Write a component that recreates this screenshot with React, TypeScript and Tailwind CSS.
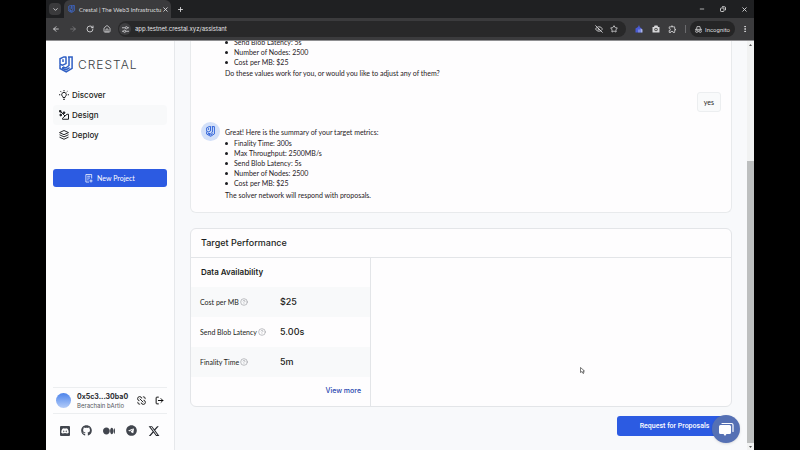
import type { ReactNode } from "react";
import {
  ArrowLeft, ArrowRight, ChevronDown, CircleHelp, EyeOff, House,
  LogOut, Minus, MoreVertical, Plus, RotateCw, Star, X,
} from "lucide-react";
import { FaDiscord, FaGithub, FaMedium, FaTelegram, FaXTwitter } from "react-icons/fa6";
import { MdOutlineExtension } from "react-icons/md";

function CrestalMark({ className }: { className: string }) {
  return (
    <svg viewBox="0 0 14 17" fill="none" stroke="currentColor" strokeWidth="1.5" className={className} aria-hidden="true">
      <path d="M9 .9h4.100v11.400L7.200 16 1 12.500V9" />
      <path d="M7.500 .9H4.800L1 2.800v5.400l2.500 1L7 7.600V1M4 3.300V6" />
      <path d="M10 .9v8.600L6.800 12 3.800 11M3.800 11v1.600l3.200 1.300 3.600-2.200" />
    </svg>
  );
}

function TuneIcon() {
  return (
    <svg viewBox="0 0 12 12" fill="none" stroke="currentColor" strokeWidth="1.4" className="size-[7px]" aria-hidden="true">
      <path d="M0 3h5M10 3h2M0 9h2M7 9h5" />
      <circle cx="7.5" cy="3" r="1.9" />
      <circle cx="4.5" cy="9" r="1.9" />
    </svg>
  );
}

function IncognitoIcon() {
  return (
    <svg viewBox="0 0 12 12" fill="none" stroke="currentColor" strokeWidth="1.3" className="size-[7px]" aria-hidden="true">
      <path d="M0 5.8h12M2.7 5.5 3.5 1h5l.8 4.5" />
      <circle cx="3" cy="9" r="2" />
      <circle cx="9" cy="9" r="2" />
      <path d="M5 8.8h2" />
    </svg>
  );
}

function BulbIcon() {
  return (
    <svg viewBox="0 0 20 20" fill="none" stroke="currentColor" strokeWidth="2" className="size-[10px]" aria-hidden="true">
      <path d="M8 15v-1.500a4.600 4.600 0 1 1 4 0V15ZM8 18.500h4" />
      <path d="M10 0v2.500M0 9.500h2.500M17.500 9.500H20M3 2.500l1.800 1.800M17 2.500l-1.800 1.800" />
    </svg>
  );
}

function DesignIcon() {
  return (
    <svg viewBox="0 0 20 20" fill="none" stroke="currentColor" strokeWidth="2" strokeLinejoin="round" className="size-[10px]" aria-hidden="true">
      <circle cx="2.500" cy="2.500" r="1.800" fill="currentColor" />
      <circle cx="3.500" cy="10" r="1.800" fill="currentColor" />
      <circle cx="10" cy="5.500" r="1.800" fill="currentColor" />
      <path d="m3 3 9 9M7 18.500h12V8.500h-3L7 16.500Z" />
    </svg>
  );
}

function StackIcon() {
  return (
    <svg viewBox="0 0 20 20" fill="none" stroke="currentColor" strokeWidth="1.900" strokeLinejoin="round" className="size-[10px]" aria-hidden="true">
      <path d="m10 1 9 4.200-9 4.200-9-4.200ZM1 9.500l9 4.200 9-4.200M1 14.300l9 4.200 9-4.200" />
    </svg>
  );
}

function NewProjectIcon() {
  return (
    <svg viewBox="0 0 18 20" fill="none" stroke="currentColor" strokeWidth="1.7" className="h-[9px] w-2" aria-hidden="true">
      <path d="M15 10V1H2v17h7M5 5h7M5 9h6M5 13h3M13.500 12v7M10 15.500h7" />
    </svg>
  );
}

function SwapIcon() {
  return (
    <svg viewBox="0 0 20 20" fill="none" stroke="currentColor" strokeWidth="1.900" className="size-[9px]" aria-hidden="true">
      <path d="M10.500 5.500a4.600 4.600 0 1 0-5 5M9.500 14.500a4.600 4.600 0 1 0 5-5" />
      <path d="m6 6 8 8M13 2h2a3 3 0 0 1 3 3v2M2 13v2a3 3 0 0 0 3 3h2" />
    </svg>
  );
}

function IconButton({ label, children, className = "" }: { label: string; children: ReactNode; className?: string }) {
  return (
    <button type="button" aria-label={label} className={`flex shrink-0 items-center justify-center ${className}`}>
      {children}
    </button>
  );
}

function BrowserChrome() {
  return (
    <header className="shrink-0 text-[#dcdcde]">
      <div className="flex h-[18px] items-center bg-[#1f2022] pl-[3px]">
        <IconButton label="Search tabs" className="size-3 rounded-sm bg-[#3a3a3c]">
          <ChevronDown className="size-[7px]" strokeWidth={3} />
        </IconButton>
        <div className="ml-[3px] flex h-full w-[107px] items-center rounded-t-md bg-[#3b3b3d] pr-[3px] pl-1">
          <CrestalMark className="h-2 w-[7px] shrink-0 text-[#3f6fe0]" />
          <span className="ml-1 flex-1 font-[Lato,sans-serif] text-[6px] whitespace-nowrap">
            Crestal | The Web3 Infrastructu
          </span>
          <IconButton label="Close tab" className="size-2">
            <X className="size-[7px]" strokeWidth={3} />
          </IconButton>
        </div>
        <IconButton label="New tab" className="ml-[3px] size-3">
          <Plus className="size-[7px]" strokeWidth={3} />
        </IconButton>
        <div className="ml-auto flex items-center gap-[13px] pr-[6px]">
          <IconButton label="Minimize" className="size-2"><Minus className="size-[6px]" strokeWidth={3} /></IconButton>
          <IconButton label="Restore" className="size-2">
            <svg viewBox="0 0 12 12" fill="none" stroke="currentColor" strokeWidth="1.800" className="size-[6px]" aria-hidden="true">
              <rect x="1" y="4" width="7" height="7" rx="1.500" />
              <path d="M4 1.500h5A2 2 0 0 1 11 3.500v5" />
            </svg>
          </IconButton>
          <IconButton label="Close" className="size-2"><X className="size-[7px]" strokeWidth={3} /></IconButton>
        </div>
      </div>
      <div className="flex h-[23px] items-center border-b border-[#8f8f92] bg-[#3b3b3d] pr-[5px] pl-[6px]">
        <div className="flex items-center gap-[9px]">
          <IconButton label="Back" className="size-2"><ArrowLeft className="size-2" strokeWidth={2.500} /></IconButton>
          <IconButton label="Forward" className="size-2 text-[#7b7b7e]"><ArrowRight className="size-2" strokeWidth={2.500} /></IconButton>
          <IconButton label="Reload" className="size-2"><RotateCw className="size-2" strokeWidth={2.500} /></IconButton>
          <IconButton label="Home" className="size-2"><House className="size-2" strokeWidth={2.500} /></IconButton>
        </div>
        <div className="ml-[7px] flex h-4 flex-1 items-center rounded-full bg-[#282829] px-px">
          <IconButton label="Site information" className="size-3 rounded-full bg-[#3f3f41]"><TuneIcon /></IconButton>
          <input
            aria-label="Address"
            readOnly
            value="app.testnet.crestal.xyz/assistant"
            className="ml-1 min-w-0 flex-1 bg-transparent text-[6px] leading-3 text-[#e4e4e6] outline-none"
          />
          <IconButton label="Tracking blocked" className="mr-[7px] size-2"><EyeOff className="size-2" strokeWidth={2.500} /></IconButton>
          <IconButton label="Bookmark" className="mr-[7px] size-2"><Star className="size-2" strokeWidth={2.500} /></IconButton>
        </div>
        <div className="ml-2 flex items-center gap-2">
          <IconButton label="Wallet extension" className="size-[9px]">
            <svg viewBox="0 0 16 16" className="size-2" aria-hidden="true">
              <path d="M1 15V7l5-3 2-4 2 5 3 1v9Z" fill="#4a5bd4" />
              <path d="M7 15V9h2v6Zm4-8 4 2v6h-4Z" fill="#a9b4e8" />
            </svg>
          </IconButton>
          <IconButton label="Screenshot extension" className="size-[9px]">
            <svg viewBox="0 0 16 16" className="size-2" aria-hidden="true">
              <path d="M5 1h6l1 3h3v11H1V4h3Z" fill="#d8d8da" />
              <circle cx="8" cy="9" r="3.500" fill="#555" />
              <circle cx="8" cy="9" r="1.500" fill="#eee" />
            </svg>
          </IconButton>
          <IconButton label="Extensions" className="size-[9px]"><MdOutlineExtension className="size-[10px]" /></IconButton>
        </div>
        <span className="mr-1 ml-2 h-2 w-px bg-[#6b6b6e]" />
        <button type="button" className="flex h-4 w-[45px] items-center gap-[3px] rounded-full bg-[#252526] pl-[5px] font-[Roboto,sans-serif] text-[6px]">
          <IncognitoIcon />
          Incognito
        </button>
        <IconButton label="Browser menu" className="ml-[6px] size-2"><MoreVertical className="size-2" strokeWidth={3} /></IconButton>
      </div>
    </header>
  );
}

const navItem = "flex h-5 items-center gap-[3px] rounded-sm px-[6px] text-[8px] font-medium text-[#1b1c20]";

function Sidebar() {
  return (
    <aside className="flex w-[129px] shrink-0 flex-col border-r border-[#e6e8eb] bg-[#fdfdfe] px-[7px]">
      <div className="mt-[15px] flex items-center gap-[5px] pl-[6px]">
        <CrestalMark className="h-[17px] w-[14px] text-[#2f5fc4]" />
        <span className="text-[12px] leading-4 font-light tracking-[1px] text-[#3c3f44]">CRESTAL</span>
      </div>
      <nav className="mt-3">
        <a href="#discover" className={navItem}><BulbIcon />Discover</a>
        <a href="#design" className={`${navItem} bg-[#f8f9fa]`}><DesignIcon />Design</a>
        <a href="#deploy" className={navItem}><StackIcon />Deploy</a>
      </nav>
      <button type="button" className="mt-6 flex h-[18px] shrink-0 items-center justify-center gap-1 rounded-[3px] bg-[#2c5be2] font-[Lato,sans-serif] text-[7px] text-white">
        <NewProjectIcon />
        New Project
      </button>
      <div className="mt-auto flex h-[27px] items-center border-y border-[#eceef0] px-[3px]">
        <span className="size-[15px] shrink-0 rounded-full bg-linear-to-b from-[#4d83ea] to-[#b4ccf8]" />
        <div className="ml-[6px] min-w-0 flex-1 text-[#2a2b30]">
          <p className="text-[7px] leading-[10px] font-bold">0x5c3...30ba0</p>
          <p className="text-[6px] leading-2 text-[#55575d]">Berachain bArtio</p>
        </div>
        <IconButton label="Switch network" className="size-[9px]"><SwapIcon /></IconButton>
        <IconButton label="Log out" className="ml-2 size-[10px]"><LogOut className="size-[9px]" strokeWidth={2.500} /></IconButton>
      </div>
      <div className="flex h-9 items-center justify-between px-[7px] pb-[3px] text-[#42464e]">
        <a href="#discord" aria-label="Discord" className="flex size-[10px] items-center justify-center rounded-[1px] bg-[#42464e] text-white"><FaDiscord className="size-[8px]" /></a>
        <a href="#github" aria-label="GitHub"><FaGithub className="size-[11px]" /></a>
        <a href="#medium" aria-label="Medium"><FaMedium className="size-[12px]" /></a>
        <a href="#telegram" aria-label="Telegram"><FaTelegram className="size-[11px]" /></a>
        <a href="#x" aria-label="X"><FaXTwitter className="size-[12px] text-[#22252b]" /></a>
      </div>
    </aside>
  );
}

const previousMetrics = ["Send Blob Latency: 5s", "Number of Nodes: 2500", "Cost per MB: $25"];
const summaryMetrics = ["Finality Time: 300s", "Max Throughput: 2500MB/s", ...previousMetrics];

function MetricList({ items }: { items: string[] }) {
  return (
    <ul>
      {items.map((item) => (
        <li key={item} className="flex items-center gap-[6px] before:size-[3px] before:rounded-full before:bg-[#1b1c20]">
          {item}
        </li>
      ))}
    </ul>
  );
}

function Chat() {
  return (
    <section aria-label="Chat" className="shrink-0 rounded-b-md border border-t-0 border-[#e8eaec] bg-[#fefdfe] px-[10px] pb-3 font-[Lato,sans-serif] text-[7px] leading-[10px] text-[#1f2024]">
      <div className="pl-6">
        <MetricList items={previousMetrics} />
        <p className="mt-px">Do these values work for you, or would you like to adjust any of them?</p>
      </div>
      <div className="mt-[14px] flex justify-end">
        <p className="rounded-[3px] border border-[#eceef0] bg-[#f9fafb] px-[6px] py-1">yes</p>
      </div>
      <div className="mt-[10px] flex gap-[5px]">
        <span className="flex size-[19px] shrink-0 items-center justify-center rounded-full bg-[#d3e0f9]">
          <CrestalMark className="h-[11px] w-[9px] text-[#2f62d8]" />
        </span>
        <div className="pt-[5px]">
          <p className="mb-px">Great! Here is the summary of your target metrics:</p>
          <MetricList items={summaryMetrics} />
          <p className="mt-[2px]">The solver network will respond with proposals.</p>
        </div>
      </div>
    </section>
  );
}

const performance = [
  { label: "Cost per MB", value: "$25" },
  { label: "Send Blob Latency", value: "5.00s" },
  { label: "Finality Time", value: "5m" },
];

function TargetPerformance() {
  return (
    <section className="mt-[15px] shrink-0 rounded-md border border-[#e3e5e8] bg-[#fefdfe] text-[#1c1d21]">
      <h2 className="border-b border-[#e3e5e8] px-[10px] text-[9px] leading-7 font-medium">Target Performance</h2>
      <div className="flex h-[148px] w-[180px] flex-col border-r border-[#e3e5e8]">
        <h3 className="px-[10px] text-[8px] leading-[29px] font-semibold">Data Availability</h3>
        <table className="w-full text-left">
          <tbody>
            {performance.map((row) => (
              <tr key={row.label} className="h-[30px] odd:bg-[#f8f9fa]">
                <th scope="row" className="w-[89px] pl-[9px] font-[Lato,sans-serif] text-[7px] font-normal whitespace-nowrap">
                  <span className="flex items-center gap-px">
                    {row.label}
                    <CircleHelp className="size-[8px] text-[#85878d]" strokeWidth={1.500} />
                  </span>
                </th>
                <td className="text-[9px] font-medium">{row.value}</td>
              </tr>
            ))}
          </tbody>
        </table>
        <a href="#more" className="flex flex-1 items-center self-end pr-[9px] text-[7px] font-medium text-[#2746ae]">View more</a>
      </div>
    </section>
  );
}

export default function App() {
  return (
    <div className="relative flex h-screen flex-col bg-black px-[46px] font-[Inter,'Noto_Sans',sans-serif]">
      <BrowserChrome />
      <div className="flex min-h-0 flex-1">
        <Sidebar />
        <main className="flex min-w-0 flex-1 flex-col justify-end overflow-hidden bg-[#f8f9fb] px-[15px] pb-[14px]">
          <Chat />
          <TargetPerformance />
          <button type="button" className="mt-[9px] h-5 w-[115px] shrink-0 self-end rounded-[3px] bg-[#2c5be2] font-[Roboto,sans-serif] text-[7px] font-medium text-white">
            Request for Proposals
          </button>
        </main>
        <div className="flex w-[7px] shrink-0 flex-col items-center bg-[#f1f2f2]">
          <svg viewBox="0 0 7 7" className="size-[7px] shrink-0" aria-hidden="true"><path d="M2 5h3L3.500 3Z" fill="#555" /></svg>
          <span className="mt-[113px] w-full flex-1 bg-[#bdbfbf]" />
          <svg viewBox="0 0 7 7" className="size-[7px] shrink-0" aria-hidden="true"><path d="M2 3h3L3.500 5Z" fill="#555" /></svg>
        </div>
      </div>
      <button type="button" aria-label="Open chat" className="absolute right-[60px] bottom-[7px] flex size-7 items-center justify-center rounded-full bg-[#5570b4] shadow-sm">
        <svg viewBox="0 0 16 16" className="size-4" aria-hidden="true">
          <path d="M4 2.500h9.500A1.500 1.500 0 0 1 15 4v6.500" fill="none" stroke="#fff" strokeWidth="1.200" strokeLinecap="round" />
          <path d="M2.500 4h9A1.500 1.500 0 0 1 13 5.500v6a1.500 1.500 0 0 1-1.500 1.500H8.500L7 15l-1.500-2h-3A1.500 1.500 0 0 1 1 11.500v-6A1.500 1.500 0 0 1 2.500 4Z" fill="#fff" />
        </svg>
      </button>
      <svg viewBox="0 0 10 14" className="pointer-events-none absolute right-[215px] bottom-[76px] h-[7px] w-[5px]" aria-hidden="true">
        <path d="M1 1v10l3-2 2 4 2-1-2-4h3Z" fill="#fff" stroke="#333" strokeWidth="1.300" />
      </svg>
    </div>
  );
}
